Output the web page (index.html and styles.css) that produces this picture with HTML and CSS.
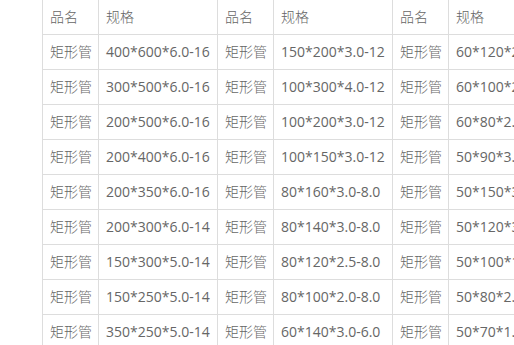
FILE: index.html
```html
<!DOCTYPE html>
<html>
<head>
<meta charset="utf-8">
<link rel="stylesheet" href="styles.css">
</head>
<body>
<table class="spec">
<colgroup>
<col class="c-name"><col class="c-spec"><col class="c-name"><col class="c-spec"><col class="c-name"><col class="c-spec">
</colgroup>
<tr class="head"><td>品名</td><td>规格</td><td>品名</td><td>规格</td><td>品名</td><td>规格</td></tr>
<tr><td>矩形管</td><td>400*600*6.0-16</td><td>矩形管</td><td>150*200*3.0-12</td><td>矩形管</td><td>60*120*2.5-6.0</td></tr>
<tr><td>矩形管</td><td>300*500*6.0-16</td><td>矩形管</td><td>100*300*4.0-12</td><td>矩形管</td><td>60*100*2.5-6.0</td></tr>
<tr><td>矩形管</td><td>200*500*6.0-16</td><td>矩形管</td><td>100*200*3.0-12</td><td>矩形管</td><td>60*80*2.0-6.0</td></tr>
<tr><td>矩形管</td><td>200*400*6.0-16</td><td>矩形管</td><td>100*150*3.0-12</td><td>矩形管</td><td>50*90*3.0-6.0</td></tr>
<tr><td>矩形管</td><td>200*350*6.0-16</td><td>矩形管</td><td>80*160*3.0-8.0</td><td>矩形管</td><td>50*150*3.0-6.0</td></tr>
<tr><td>矩形管</td><td>200*300*6.0-14</td><td>矩形管</td><td>80*140*3.0-8.0</td><td>矩形管</td><td>50*120*3.0-6.0</td></tr>
<tr><td>矩形管</td><td>150*300*5.0-14</td><td>矩形管</td><td>80*120*2.5-8.0</td><td>矩形管</td><td>50*100*1.5-6.0</td></tr>
<tr><td>矩形管</td><td>150*250*5.0-14</td><td>矩形管</td><td>80*100*2.0-8.0</td><td>矩形管</td><td>50*80*2.0-6.0</td></tr>
<tr><td>矩形管</td><td>350*250*5.0-14</td><td>矩形管</td><td>60*140*3.0-6.0</td><td>矩形管</td><td>50*70*1.5-6.0</td></tr>
</table>
</body>
</html>
```
FILE: styles.css
```css
html, body {
  margin: 0;
  padding: 0;
  background: #fff;
  overflow: hidden;
}
.spec {
  margin: -1px 0 0 42px;
  border-collapse: collapse;
  table-layout: fixed;
  width: 525px;
  font-family: "Open Sans", "Noto Sans CJK SC", sans-serif;
  font-size: 14px;
  color: #666;
}
.c-name { width: 56px; }
.c-spec { width: 119px; }
.spec td {
  border: 1px solid #ddd;
  height: 35px;
  padding: 0 0 0 7px;
  box-sizing: border-box;
  white-space: nowrap;
  overflow: hidden;
  line-height: 20px;
  vertical-align: middle;
}
.spec td:nth-child(odd),
.spec .head td {
  font-weight: 300;
}
```
